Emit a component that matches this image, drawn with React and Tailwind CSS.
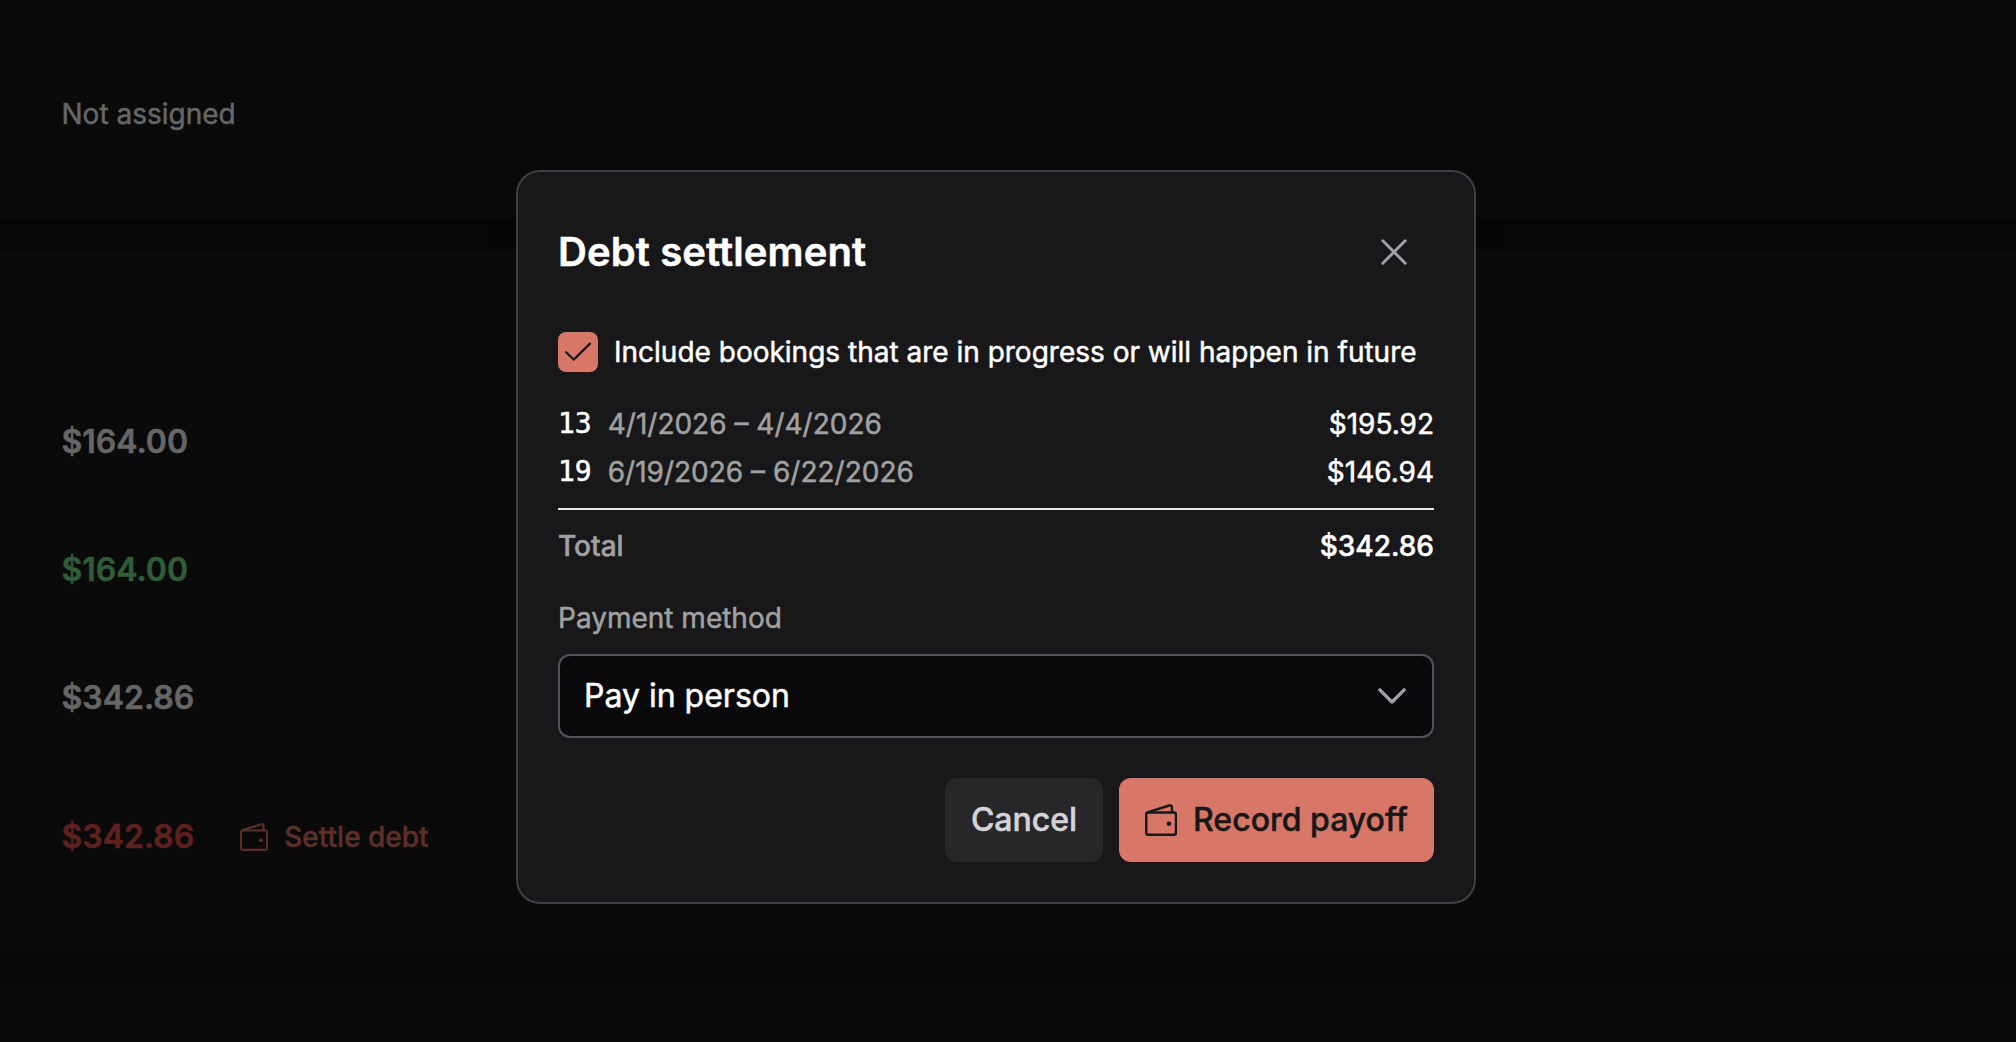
const bookings = [
  { id: 13, dates: '4/1/2026 – 4/4/2026', amount: '$195.92' },
  { id: 19, dates: '6/19/2026 – 6/22/2026', amount: '$146.94' }
]

const WalletIcon = ({ className }) => {
  return <svg className={className} viewBox="0 0 32 32" fill="none" stroke="currentColor" strokeWidth="2.5" strokeLinejoin="round">
    <rect x="1.2" y="8.6" width="29.8" height="22.2" rx="2" />
    <path d="M2.4 8.4 L24.2 1.5 Q26.5 0.9 26.8 2.8 L27.2 8.4" />
    <circle cx="24" cy="19.7" r="2.3" fill="currentColor" stroke="none" />
  </svg>
}

const CloseIcon = () => {
  return <svg className="size-[26px]" viewBox="0 0 26 26" fill="none" stroke="currentColor" strokeWidth="2.9" strokeLinecap="round">
    <path d="M1.8 1.8 L24.2 24.2 M24.2 1.8 L1.8 24.2" />
  </svg>
}

const CheckIcon = () => {
  return <svg className="size-10" viewBox="0 0 40 40" fill="none" stroke="currentColor" strokeWidth="2.2" strokeLinecap="round" strokeLinejoin="round">
    <path d="M8.2 20.2 L15.7 27.6 L32 11.6" />
  </svg>
}

const ChevronIcon = () => {
  return <svg className="h-4 w-7" viewBox="0 0 28 16" fill="none" stroke="currentColor" strokeWidth="3.3" strokeLinecap="round" strokeLinejoin="round">
    <path d="M1.8 1.8 L14 14 L26.2 1.8" />
  </svg>
}

const Summary = () => {
  return <main className="flex flex-col gap-8">
    <section className="h-[218px] bg-[#0a0a0a] px-[61.5px] pt-[94px] text-[28px] leading-10 text-[#666666]">
      Not assigned
    </section>
    <section className="flex h-[702px] flex-col bg-[#0a0a0a] px-[61.5px] pt-[128px] text-[32px] font-semibold text-[#666666]">
      <div className="flex h-32 items-center">$164.00</div>
      <div className="flex h-32 items-center text-[#305c37]">$164.00</div>
      <div className="flex h-32 items-center">$342.86</div>
      <div className="flex h-[150px] items-center text-[#5f211f]">
        <span>$342.86</span>
        <button className="ml-[46px] flex items-center gap-4 text-[28px] font-medium text-[#5c2f28]">
          <WalletIcon className="size-7" />
          Settle debt
        </button>
      </div>
    </section>
    <section className="h-[58px] bg-[#0a0a0a]"></section>
  </main>
}

const Booking = ({ id, dates, amount }) => {
  return <li className="flex h-12 items-center">
    <span className="mr-4 font-['DejaVu_Sans_Mono',monospace]">{id}</span>
    <span className="grow text-[#a1a1a1]">{dates}</span>
    <span>{amount}</span>
  </li>
}

const DebtDialog = () => {
  return <div role="dialog" className="h-[734px] w-[960px] rounded-3xl border-2 border-[#3f3f46] bg-[#18181a] px-10 text-[28px] leading-10 text-white shadow-[0_12px_32px_rgba(0,0,8,0.12)]">
    <header className="flex items-center pt-[54px] pr-[27px]">
      <h2 className="grow text-[40px] leading-[52px] font-semibold tracking-[0.1px]">Debt settlement</h2>
      <button className="text-[#a1a1aa]"><CloseIcon /></button>
    </header>
    <label className="mt-[54px] flex items-center gap-4">
      <span className="rounded-lg bg-[#d87767] text-[#18181a]"><CheckIcon /></span>
      Include bookings that are in progress or will happen in future
    </label>
    <ul className="mt-7 border-b-2 border-[#e5e5e5] pb-3">
      {bookings.map(booking => <Booking key={booking.id} {...booking} />)}
    </ul>
    <div className="mt-4 flex justify-between font-medium">
      <span className="text-[#a1a1a1]">Total</span>
      <span>$342.86</span>
    </div>
    <div className="mt-8 text-[#a1a1a1]">Payment method</div>
    <button className="mt-4 flex h-[84px] w-full items-center justify-between rounded-xl border-2 border-[#52525b] bg-[#09090b] pr-[26px] pl-6 text-[32px]">
      Pay in person
      <span className="text-[#a1a1aa]"><ChevronIcon /></span>
    </button>
    <footer className="mt-10 flex justify-end gap-4 text-[32px] font-medium">
      <button className="h-[84px] w-[158px] rounded-xl bg-[#27272a] text-[#d4d4d8]">Cancel</button>
      <button className="flex h-[84px] w-[315px] items-center justify-center gap-4 rounded-xl bg-[#d87767] text-[#18181a]">
        <WalletIcon className="size-8" />
        Record payoff
      </button>
    </footer>
  </div>
}

export default function App() {
  return <div className="relative h-[1042px] overflow-hidden bg-[#060606] font-['Inter',sans-serif] [-webkit-text-stroke:0.5px]">
    <Summary />
    <div className="absolute top-[170px] left-[516px]">
      <DebtDialog />
    </div>
  </div>
}
